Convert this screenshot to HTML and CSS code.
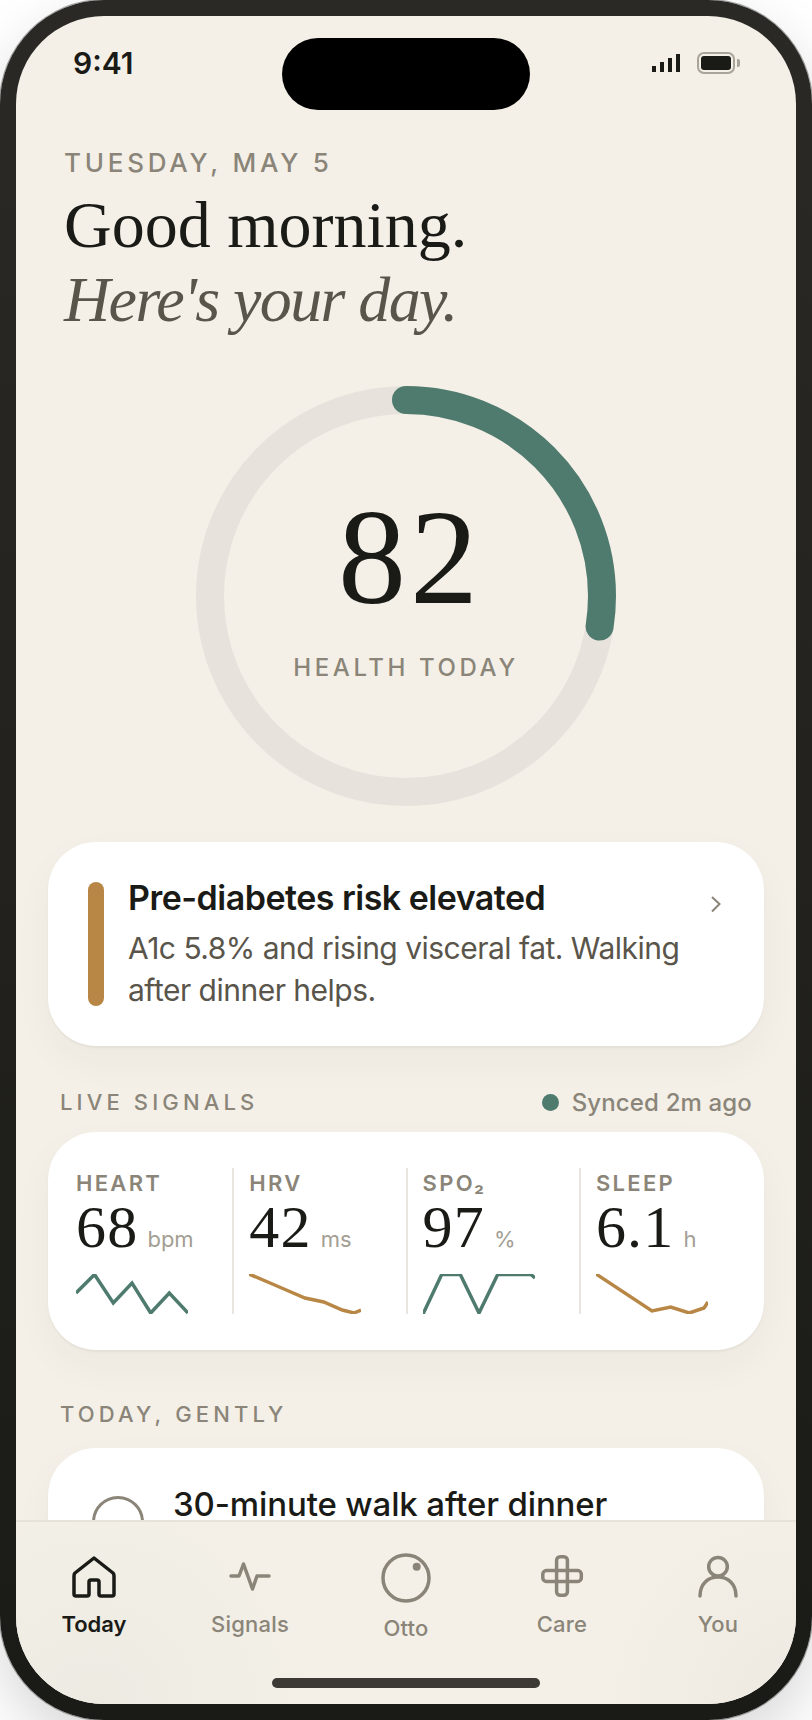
FILE: index.html
```html
<!DOCTYPE html>
<html lang="en">
<head>
<meta charset="utf-8">
<title>Today</title>
<link rel="stylesheet" href="styles.css">
</head>
<body>
<div class="phone">
  <div class="screen">
    <div class="status">
      <span class="time">9:41</span>
      <div class="island"></div>
      <div class="status-icons">
        <div class="signal"><i class="b1"></i><i class="b2"></i><i class="b3"></i><i class="b4"></i></div>
        <div class="battery"><div class="battery-fill"></div></div>
        <div class="battery-nub"></div>
      </div>
    </div>
    <main class="scroll">
      <header class="greeting">
        <div class="date">TUESDAY, MAY 5</div>
        <h1 class="hello">Good morning.<br><em>Here's your day.</em></h1>
      </header>
      <section class="ring">
        <svg class="ring-svg" width="420" height="420" viewBox="0 0 420 420">
          <circle class="ring-track" cx="210" cy="210" r="196"/>
          <circle class="ring-arc" cx="210" cy="210" r="196" pathLength="100" transform="rotate(-90 210 210)"/>
        </svg>
        <div class="ring-center">
          <div class="score">82</div>
          <div class="score-label">HEALTH TODAY</div>
        </div>
      </section>
      <section class="card alert">
        <div class="alert-bar"></div>
        <div class="alert-text">
          <div class="alert-title">Pre-diabetes risk elevated</div>
          <div class="alert-body">A1c 5.8% and rising visceral fat. Walking after dinner helps.</div>
        </div>
        <svg class="chevron" width="12" height="18" viewBox="0 0 12 18"><path d="M2 2 L9.5 9 L2 16.500"/></svg>
      </section>
      <div class="section-head live-head">
        <span class="section-title">LIVE SIGNALS</span>
        <span class="synced"><i class="dot"></i>Synced 2m ago</span>
      </div>
      <section class="card signals">
        <div class="sig">
          <div class="sig-label">HEART</div>
          <div class="sig-value"><span class="num">68</span><span class="unit">bpm</span></div>
          <svg class="spark" width="112" height="40" viewBox="0 0 112 40"><polyline class="green" points="0,19 18.500,0.500 37.300,29 56,9 74.700,39 93.300,19 112,39"/></svg>
        </div>
        <div class="sig">
          <div class="sig-label">HRV</div>
          <div class="sig-value"><span class="num">42</span><span class="unit">ms</span></div>
          <svg class="spark" width="112" height="40" viewBox="0 0 112 40"><polyline class="amber" points="0,0 18.700,8 37.300,16 56,24 74.700,28 93.300,36 105,39 112,36"/></svg>
        </div>
        <div class="sig">
          <div class="sig-label">SPO₂</div>
          <div class="sig-value"><span class="num">97</span><span class="unit">%</span></div>
          <svg class="spark" width="112" height="40" viewBox="0 0 112 40"><polyline class="green" points="0,40 18.700,0.500 37.300,0.500 56,39 74.700,0.500 108,0.500 112,4"/></svg>
        </div>
        <div class="sig">
          <div class="sig-label">SLEEP</div>
          <div class="sig-value"><span class="num">6.1</span><span class="unit">h</span></div>
          <svg class="spark" width="112" height="40" viewBox="0 0 112 40"><polyline class="amber" points="0,0 56,37 74.700,33 93.300,39 108,34 112,28"/></svg>
        </div>
      </section>
      <div class="section-head today-head">
        <span class="section-title">TODAY, GENTLY</span>
      </div>
      <section class="card task">
        <div class="task-check"></div>
        <div class="task-title">30-minute walk after dinner</div>
      </section>
    </main>
    <nav class="tabbar">
      <div class="tabs">
        <div class="tab active">
          <svg class="tab-icon" width="48" height="48" viewBox="0 0 48 48"><path d="M24 5 L5 20 Q4 21 4 23 V41 Q4 43 6 43 H17 Q19 43 19 41 V29 Q19 27 21 27 H27 Q29 27 29 29 V41 Q29 43 31 43 H42 Q44 43 44 41 V23 Q44 21 43 20 Z"/></svg>
          <span class="tab-label">Today</span>
        </div>
        <div class="tab">
          <svg class="tab-icon" width="48" height="48" viewBox="0 0 48 48"><path d="M5 23 H13 L17.500 11 L26.500 36 L31 23 H43"/></svg>
          <span class="tab-label">Signals</span>
        </div>
        <div class="tab">
          <svg class="tab-icon otto" width="52" height="52" viewBox="0 0 52 52"><circle cx="26" cy="26" r="23"/><circle class="otto-dot" cx="36.700" cy="14.700" r="4"/></svg>
          <span class="tab-label">Otto</span>
        </div>
        <div class="tab">
          <svg class="tab-icon" width="48" height="48" viewBox="0 0 48 48"><rect x="18.600" y="3.800" width="10.800" height="38.500" rx="3.500"/><rect x="4.800" y="17.600" width="38.500" height="10.800" rx="3.500"/></svg>
          <span class="tab-label">Care</span>
        </div>
        <div class="tab">
          <svg class="tab-icon" width="48" height="48" viewBox="0 0 48 48"><circle cx="24" cy="13.700" r="9.300"/><path d="M6 43 C6 31 14 24 24 24 C34 24 42 31 42 43"/></svg>
          <span class="tab-label">You</span>
        </div>
      </div>
      <div class="home-indicator"></div>
    </nav>
  </div>
</div>
</body>
</html>
```
FILE: styles.css
```css
* { box-sizing: border-box; }
html, body { margin: 0; padding: 0; background: #fff; }
body { width: 812px; height: 1720px; overflow: hidden; font-family: "Inter", "Liberation Sans", sans-serif; color: #1a1a16; }

.phone {
  width: 812px;
  height: 1720px;
  padding: 16px;
  border-radius: 104px;
  background: linear-gradient(180deg, #2a2925 0%, #1a1a16 100%);
  box-shadow: 0 0 0 1px rgba(0,0,0,.35), 0 24px 60px rgba(0,0,0,.16);
}
.screen {
  position: relative;
  width: 780px;
  height: 1688px;
  border-radius: 88px;
  overflow: hidden;
  background: #f4f0e8;
  display: flex;
  flex-direction: column;
}

/* status bar */
.status {
  flex: none;
  height: 96px;
  display: flex;
  justify-content: space-between;
  align-items: flex-start;
  padding: 29px 56px 0 57px;
}
.time { font-size: 30px; line-height: 36px; font-weight: 600; letter-spacing: 0; }
.island {
  position: absolute;
  left: 266px;
  top: 22px;
  width: 248px;
  height: 72px;
  border-radius: 36px;
  background: #000;
}
.status-icons { display: flex; align-items: center; padding-top: 7px; }
.signal { display: flex; align-items: flex-end; gap: 4px; height: 18px; margin-right: 17px; }
.signal i { display: block; width: 4px; background: #1a1a16; }
.b1 { height: 6px; }
.b2 { height: 10px; }
.b3 { height: 14px; }
.b4 { height: 18px; }
.battery { width: 38px; height: 22px; border: 2px solid #a8a49a; border-radius: 7px; padding: 2px; }
.battery-fill { width: 100%; height: 100%; border-radius: 3px; background: #1a1a16; }
.battery-nub { width: 3px; height: 8px; margin-left: 2px; background: #a8a49a; border-radius: 0 2px 2px 0; }

/* scroll area */
.scroll { flex: 1; min-height: 0; overflow: hidden; }
.greeting { padding: 35px 48px 0; }
.date { font-size: 26px; line-height: 32px; font-weight: 500; letter-spacing: .145em; color: #8a8578; }
.hello {
  margin: 9px 0 0;
  font-family: "Liberation Serif", serif;
  font-weight: 400;
  font-size: 66px;
  line-height: 74px;
  letter-spacing: 0;
  color: #1a1a16;
}
.hello em { color: #5a554b; font-style: italic; font-size: 64px; letter-spacing: -1.600px; }

.ring {
  position: relative;
  width: 420px;
  height: 420px;
  margin: 49px auto 36px;
}
.ring-svg { display: block; }
.ring-track { fill: none; stroke: #e7e3dc; stroke-width: 28; }
.ring-arc { fill: none; stroke: #4f7b6f; stroke-width: 28; stroke-linecap: round; stroke-dasharray: 27.500 100; }
.ring-center {
  position: absolute;
  inset: 0;
  display: flex;
  flex-direction: column;
  align-items: center;
}
.score {
  margin-top: 96px;
  padding-left: 8px;
  font-family: "Liberation Serif", serif;
  font-size: 136px;
  line-height: 150px;
  letter-spacing: 4px;
  color: #1a1a16;
}
.score-label { margin-top: 21px; font-size: 24px; line-height: 30px; font-weight: 500; letter-spacing: .15em; color: #8a8578; }

/* cards */
.card {
  margin: 0 32px;
  background: #fff;
  border-radius: 48px;
  box-shadow: 0 2px 2px rgba(60,50,30,.05), 0 16px 40px rgba(60,50,30,.04);
}
.alert { display: flex; align-items: flex-start; gap: 24px; height: 204px; padding: 38px 42px 40px 40px; }
.alert-bar { flex: none; width: 16px; height: 124px; margin-top: 2px; border-radius: 8px; background: #b88746; }
.alert-text { flex: 1; min-width: 0; }
.alert-title { font-size: 34px; line-height: 36px; font-weight: 600; letter-spacing: -.015em; color: #1a1a16; }
.alert-body { margin-top: 11px; font-size: 30px; line-height: 42px; letter-spacing: -.017em; color: #5a554b; }
.chevron { flex: none; margin-top: 15px; }
.chevron path { fill: none; stroke: #8a8578; stroke-width: 2; }

.section-head { display: flex; justify-content: space-between; align-items: center; padding: 0 44px; height: 32px; }
.live-head { margin-top: 40px; margin-bottom: 14px; }
.today-head { margin-top: 48px; margin-bottom: 18px; }
.section-title { font-size: 22px; font-weight: 500; letter-spacing: .188em; color: #8a8578; }
.synced { display: flex; align-items: center; gap: 13px; font-size: 24px; font-weight: 500; letter-spacing: .006em; color: #8a8578; }
.dot { display: block; width: 17px; height: 17px; border-radius: 50%; background: #4f7b6f; }

.signals {
  height: 218px;
  padding: 36px 28px;
  display: grid;
  grid-template-columns: repeat(3, 158.300px) 1fr;
  column-gap: 15px;
}
.sig { height: 146px; padding-top: 2px; border-right: 2px solid #e9e6e0; }
.sig:last-child { border-right: 0; }
.sig-label { font-size: 22px; line-height: 26px; font-weight: 600; letter-spacing: .105em; color: #8a8578; }
.sig-value { display: flex; align-items: baseline; gap: 9px; height: 62px; }
.num { font-family: "Liberation Serif", serif; font-size: 60px; line-height: 62px; letter-spacing: .02em; color: #1a1a16; }
.unit { font-size: 22px; color: #a39e93; }
.spark { display: block; margin-top: 16px; overflow: hidden; }
.spark polyline { fill: none; stroke-width: 3.500; stroke-linejoin: miter; }
.green { stroke: #4f7b6f; }
.amber { stroke: #b88746; }

.task { display: flex; align-items: flex-start; gap: 29px; height: 200px; padding: 48px 44px; }
.task-check { flex: none; width: 52px; height: 52px; border: 3.500px solid #8a8578; border-radius: 50%; }
.task-title { font-size: 33px; line-height: 40px; font-weight: 500; letter-spacing: -.004em; margin-top: -12px; color: #1a1a16; }

/* tab bar */
.tabbar {
  flex: none;
  height: 184px;
  border-top: 2px solid #e8e3da;
  padding-top: 31px;
  background:
    radial-gradient(circle at 10% 100%, rgba(228,229,219,.5), rgba(244,240,232,0) 30%),
    radial-gradient(circle at 100% 100%, rgba(228,224,214,.4), rgba(244,240,232,0) 25%),
    #f4f0e8;
}
.tabs { display: grid; grid-template-columns: repeat(5, 1fr); height: 125px; }
.tab { display: flex; flex-direction: column; align-items: center; }
.tab-icon { display: block; fill: none; stroke: #8a8578; stroke-width: 3.500; stroke-linecap: round; stroke-linejoin: round; }
.active .tab-icon { stroke: #1a1a16; }
.otto { margin-top: -1px; margin-bottom: 1px; }
.otto-dot { fill: #8a8578; stroke: none; }
.tab-label { margin-top: 9px; font-size: 22px; line-height: 28px; font-weight: 500; letter-spacing: .01em; color: #8a8578; }
.active .tab-label { color: #1a1a16; font-weight: 600; letter-spacing: 0; }
.home-indicator { width: 268px; height: 10px; margin: 0 auto; border-radius: 5px; background: #3d3a36; }
```
